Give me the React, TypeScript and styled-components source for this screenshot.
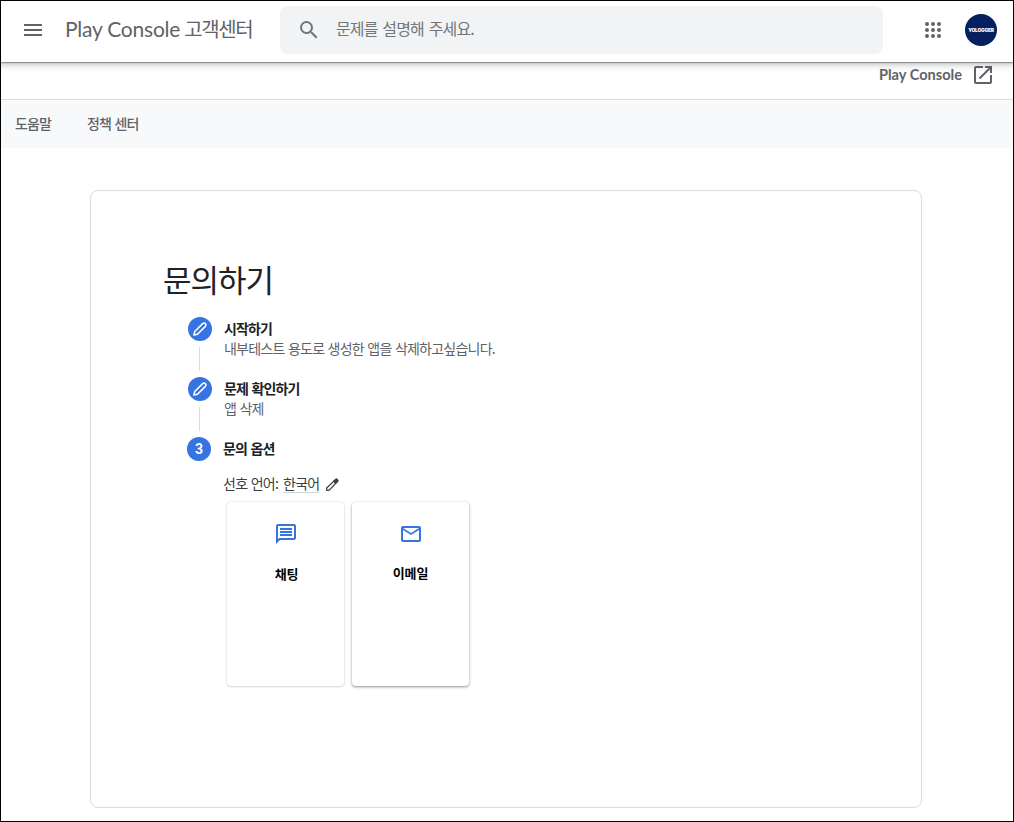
import React from 'react';
import styled, { createGlobalStyle } from 'styled-components';

const GlobalStyle = createGlobalStyle`
  * { box-sizing: border-box; }
  body { margin: 0; background: #fff; }
  h1, p { margin: 0; font-weight: 400; }
  button { border: 0; padding: 0; background: none; font: inherit; color: inherit; display: flex; }
`;

const Page = styled.div`
  width: 1014px;
  height: 822px;
  border: 1px solid #000;
  overflow: hidden;
  font-family: 'Noto Sans CJK KR', sans-serif;
  word-spacing: 1px;
  color: #202124;
`;

const Header = styled.header`
  position: relative;
  z-index: 1;
  display: flex;
  align-items: center;
  height: 61px;
  padding: 0 16px 3px 20px;
  background: #fff;
  color: #5f6368;
  box-shadow: 0 1px 1px rgba(0, 0, 0, 0.3), 0 2px 6px 1px rgba(60, 64, 67, 0.3);
`;

const Latin = styled.span<{ $size: number; $spacing: number; $weight?: number }>`
  font-family: Lato, sans-serif;
  font-size: ${(p) => p.$size}px;
  font-weight: ${(p) => p.$weight ?? 400};
  letter-spacing: ${(p) => p.$spacing}px;
  word-spacing: 0;
`;

const Brand = styled.div`
  display: flex;
  align-items: baseline;
  gap: 4px;
  width: 215px;
  margin: 0 0 2px 20px;
  line-height: 28px;
  white-space: nowrap;
`;

const BrandKorean = styled.span`
  font-size: 20px;
  letter-spacing: -1.4px;
`;

const SearchBox = styled.div`
  display: flex;
  align-items: center;
  width: 603px;
  height: 48px;
  padding: 0 17px;
  gap: 15px;
  border-radius: 8px;
  background: #f1f3f4;
  font-size: 16px;
  letter-spacing: -0.85px;
  word-spacing: 2px;
  color: #72767a;
`;

const SearchHint = styled.span`
  margin-bottom: 4px;
  line-height: 24px;
`;

const AppsButton = styled.button`
  margin-left: 38px;
`;

const Avatar = styled.div`
  display: flex;
  align-items: center;
  justify-content: center;
  width: 32px;
  height: 32px;
  margin-left: 20px;
  border-radius: 50%;
  background: #05205e;
  color: #fff;
  font: 900 4.8px/8px Inter, sans-serif;
  letter-spacing: -0.15px;
`;

const ConsoleBar = styled.div`
  display: flex;
  justify-content: flex-end;
  align-items: flex-start;
  gap: 9px;
  height: 38px;
  padding: 1px 18px 0 0;
  border-bottom: 1px solid #dadce0;
  color: #5f6368;
  line-height: 24px;
`;

const Nav = styled.nav`
  display: flex;
  gap: 36px;
  height: 48px;
  padding: 0 14px;
  background: #f8f9fb;
  color: #5f6368;
  font-size: 14px;
  font-weight: 500;
  line-height: 46px;
  letter-spacing: -0.85px;
`;

const Card = styled.main`
  width: 832px;
  height: 618px;
  margin: 42px 0 0 89px;
  padding: 68px 72px;
  border: 1px solid #dadce0;
  border-radius: 8px;
`;

const Title = styled.h1`
  font-size: 31px;
  line-height: 40px;
  letter-spacing: -1px;
`;

const Steps = styled.div`
  display: flex;
  flex-direction: column;
  margin-top: 18px;
  padding-left: 25px;
`;

const StepRow = styled.section<{ $last?: boolean }>`
  display: flex;
  gap: 12px;
  height: ${(p) => (p.$last ? 'auto' : '60px')};
  margin-left: ${(p) => (p.$last ? '-1px' : '0')};
`;

const Marker = styled.div`
  display: flex;
  flex-direction: column;
  align-items: center;
  width: 24px;
`;

const Dot = styled.div`
  display: flex;
  align-items: center;
  justify-content: center;
  width: 24px;
  height: 24px;
  border-radius: 50%;
  background: #3574e2;
  color: #fff;
  font: 700 14px/24px Roboto, sans-serif;
`;

const Connector = styled.div`
  width: 1px;
  height: 24px;
  margin: 6px 1px 0 0;
  background: #dadce0;
`;

const StepTitle = styled.p`
  font-size: 14px;
  font-weight: 700;
  line-height: 22px;
  letter-spacing: -0.85px;
`;

const StepText = styled.p`
  margin-top: -1px;
  font-size: 14px;
  line-height: 20px;
  letter-spacing: -0.77px;
  color: #5f6368;
`;

const Language = styled.div`
  display: flex;
  align-items: flex-start;
  height: 20px;
  margin-top: 14px;
  font-size: 14px;
  line-height: 20px;
  letter-spacing: -0.75px;
  color: #3c4043;
`;

const LanguageName = styled.span`
  height: 20px;
  margin: 0 4px 0 5px;
  border-bottom: 1px solid #d0d3d7;
`;

const EditButton = styled.button`
  margin: 4px 0 0 1px;
`;

const Options = styled.div`
  display: flex;
  gap: 8px;
  margin: 9px 0 0 4px;
`;

const Option = styled.button<{ $raised?: boolean }>`
  flex-direction: column;
  align-items: center;
  justify-content: flex-start;
  width: 117px;
  height: 184px;
  padding-top: 20px;
  border-radius: 4px;
  background: #fff;
  box-shadow: ${(p) =>
    p.$raised
      ? '0 1px 2px rgba(60, 64, 67, 0.4), 0 1px 3px 1px rgba(60, 64, 67, 0.15)'
      : '0 0 2px rgba(60, 64, 67, 0.22), 0 1px 2px rgba(60, 64, 67, 0.15)'};
  color: #3574e2;
`;

const OptionLabel = styled.span<{ $top: number; $indent?: number }>`
  margin-top: ${(p) => p.$top}px;
  padding-left: ${(p) => p.$indent ?? 0}px;
  color: #000;
  font-size: 13px;
  font-weight: 700;
  line-height: 20px;
  letter-spacing: -0.2px;
`;

const Glyph = styled.svg`
  display: block;
  flex: none;
  fill: currentColor;
`;

const OutlineGlyph = styled(Glyph)`
  fill: none;
  stroke: currentColor;
  stroke-linejoin: round;
`;

const paths = {
  menu: 'M3 18h18v-2H3v2zm0-5h18v-2H3v2zm0-7v2h18V6H3z',
  search:
    'M15.5 14h-.79l-.28-.27A6.47 6.47 0 0 0 16 9.5 6.5 6.5 0 1 0 9.5 16c1.61 0 3.09-.59 4.23-1.57l.27.28v.79l5 4.99L20.49 19l-4.99-5zm-6 0C7.01 14 5 11.99 5 9.5S7.01 5 9.5 5 14 7.01 14 9.5 11.99 14 9.5 14z',
  apps: [6, 12, 18]
    .flatMap((y) => [6, 12, 18].map((x) => `M${x - 2} ${y}a2 2 0 1 0 4 0a2 2 0 1 0-4 0z`))
    .join(''),
  open:
    'M19 19H5V5h7V3H5a2 2 0 0 0-2 2v14a2 2 0 0 0 2 2h14c1.1 0 2-.9 2-2v-7h-2v7zM14 3v2h3.59l-9.83 9.83 1.41 1.41L19 6.41V10h2V3h-7z',
  chat:
    'M4 4h16v12H5.17L4 17.17V4m0-2c-1.1 0-1.99.9-1.99 2L2 22l4-4h14c1.1 0 2-.9 2-2V4c0-1.1-.9-2-2-2H4zm2 10h12v2H6v-2zm0-3h12v2H6V9zm0-3h12v2H6V6z',
  mail:
    'M22 6c0-1.1-.9-2-2-2H4c-1.1 0-2 .9-2 2v12c0 1.1.9 2 2 2h16c1.1 0 2-.9 2-2V6zm-2 0l-8 5-8-5h16zm0 12H4V8l8 5 8-5v10z',
};

const Icon = ({ name }: { name: keyof typeof paths }) => (
  <Glyph width={24} height={24} viewBox="0 0 24 24" aria-hidden="true">
    <path d={paths[name]} />
  </Glyph>
);

const Pencil = ({ capped = false }: { capped?: boolean }) => (
  <OutlineGlyph
    width={16}
    height={16}
    viewBox="0 0 24 24"
    strokeWidth={capped ? 1.9 : 2.3}
    aria-hidden="true"
  >
    {capped ? (
      <>
        <path d="M4 20v-3.6L17.2 3.9a2 2 0 0 1 2.9 2.9L7.6 20z" />
        <path fill="currentColor" d="M14.4 6.5l2.8-2.6a2 2 0 0 1 2.9 2.9l-2.7 2.8z" />
      </>
    ) : (
      <path d="M16 3.9a2.9 2.9 0 0 1 4.1 4.1L8.2 19.9 2.9 21.1 4.1 15.8z" />
    )}
  </OutlineGlyph>
);

const DoneStep = ({ title, text }: { title: string; text: string }) => (
  <StepRow>
    <Marker>
      <Dot>
        <Pencil />
      </Dot>
      <Connector />
    </Marker>
    <div>
      <StepTitle>{title}</StepTitle>
      <StepText>{text}</StepText>
    </div>
  </StepRow>
);

export default function App() {
  return (
    <Page>
      <GlobalStyle />
      <Header>
        <button aria-label="메뉴">
          <Icon name="menu" />
        </button>
        <Brand>
          <Latin $size={21} $spacing={-0.22}>Play Console</Latin>
          <BrandKorean>고객센터</BrandKorean>
        </Brand>
        <SearchBox>
          <Icon name="search" />
          <SearchHint>문제를 설명해 주세요.</SearchHint>
        </SearchBox>
        <AppsButton aria-label="앱">
          <Icon name="apps" />
        </AppsButton>
        <Avatar>YOLOGGER</Avatar>
      </Header>
      <ConsoleBar>
        <Latin $size={14.6} $spacing={0} $weight={700}>Play Console</Latin>
        <Icon name="open" />
      </ConsoleBar>
      <Nav>
        <span>도움말</span>
        <span>정책 센터</span>
      </Nav>
      <Card>
        <Title>문의하기</Title>
        <Steps>
          <DoneStep title="시작하기" text="내부테스트 용도로 생성한 앱을 삭제하고싶습니다." />
          <DoneStep title="문제 확인하기" text="앱 삭제" />
          <StepRow $last>
            <Marker>
              <Dot>3</Dot>
            </Marker>
            <div>
              <StepTitle>문의 옵션</StepTitle>
              <Language>
                <span>선호 언어:</span>
                <LanguageName>한국어</LanguageName>
                <EditButton aria-label="언어 변경">
                  <Pencil capped />
                </EditButton>
              </Language>
              <Options>
                <Option>
                  <Icon name="chat" />
                  <OptionLabel $top={18} $indent={2}>채팅</OptionLabel>
                </Option>
                <Option $raised>
                  <Icon name="mail" />
                  <OptionLabel $top={17}>이메일</OptionLabel>
                </Option>
              </Options>
            </div>
          </StepRow>
        </Steps>
      </Card>
    </Page>
  );
}
